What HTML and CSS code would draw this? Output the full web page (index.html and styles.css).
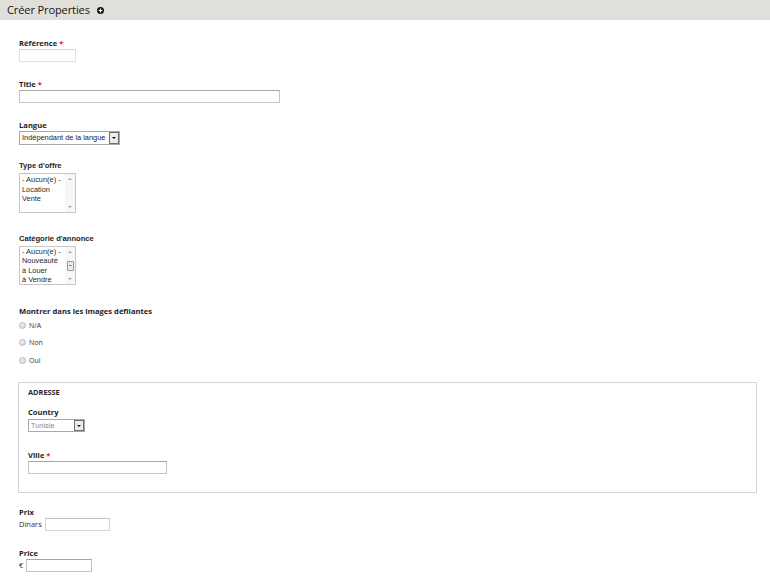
FILE: index.html
```html
<!DOCTYPE html>
<html lang="fr">
<head>
<meta charset="utf-8">
<title>Créer Properties</title>
<link rel="stylesheet" href="styles.css">
</head>
<body>
<div class="header">
  <h1 class="title">Créer Properties</h1>
  <svg class="add-icon" width="7" height="7" viewBox="0 0 7 7"><circle cx="3.5" cy="3.5" r="3.5" fill="#111"/><path d="M3.5 1.6v3.8M1.6 3.5h3.8" stroke="#fff" stroke-width="1.2"/></svg>
</div>
<form class="form">
  <div class="item item-first">
    <div class="label">Référence <span class="req">*</span></div>
    <div class="input input-light w-ref"></div>
  </div>
  <div class="item">
    <div class="label">Title <span class="req">*</span></div>
    <div class="input w-title"></div>
  </div>
  <div class="item">
    <div class="label">Langue</div>
    <div class="select w-lang"><span class="select-text">Indépendant de la langue</span><span class="select-btn"><span class="tri-down"></span></span></div>
  </div>
  <div class="item item-sm">
    <div class="label label-arial">Type d'offre</div>
    <div class="listbox">
      <div class="options">
        <div>- Aucun(e) -</div>
        <div>Location</div>
        <div>Vente</div>
      </div>
      <div class="scroll"><span class="sc-up"></span><span class="sc-down"></span></div>
    </div>
  </div>
  <div class="item item-lg">
    <div class="label label-arial">Catégorie d'annonce</div>
    <div class="listbox listbox-short">
      <div class="options options-tight">
        <div>- Aucun(e) -</div>
        <div>Nouveauté</div>
        <div>à Louer</div>
        <div>à Vendre</div>
      </div>
      <div class="scroll"><span class="sc-up"></span><span class="thumb"></span><span class="sc-down"></span></div>
    </div>
  </div>
  <div class="item item-lg">
    <div class="label">Montrer dans les images défilantes</div>
    <div class="radios">
      <div class="radio"><span class="radio-dot"></span>N/A</div>
      <div class="radio"><span class="radio-dot"></span>Non</div>
      <div class="radio"><span class="radio-dot"></span>Oui</div>
    </div>
  </div>
  <div class="fieldset">
    <div class="legend">ADRESSE</div>
    <div class="item item-country">
      <div class="label">Country</div>
      <div class="select w-country"><span class="select-text muted">Tunisie</span><span class="select-btn"><span class="tri-down"></span></span></div>
    </div>
    <div class="item item-ville">
      <div class="label">Ville <span class="req">*</span></div>
      <div class="input w-ville"></div>
    </div>
  </div>
  <div class="item item-prix">
    <div class="label">Prix</div>
    <div class="row"><span class="prefix">Dinars</span><div class="input input-soft w-prix"></div></div>
  </div>
  <div class="item">
    <div class="label">Price</div>
    <div class="row"><span class="prefix">€</span><div class="input w-price"></div></div>
  </div>
</form>
</body>
</html>
```
FILE: styles.css
```css
* { box-sizing: border-box; }
html, body { margin: 0; padding: 0; background: #fff; }
body { font-family: "Open Sans", "DejaVu Sans", sans-serif; color: #222; width: 770px; height: 578px; overflow: hidden; }

.header {
  height: 20px;
  background: #e0dfd9;
  display: flex;
  align-items: center;
  padding-left: 7px;
}
.title {
  margin: 0;
  font-size: 11px;
  font-weight: 400;
  line-height: 20px;
  color: #151515;
  letter-spacing: -0.1px;
}
.add-icon { margin-left: 7px; margin-top: 1px; }

.form { padding: 0 13px 0 19px; }
.item { margin-top: 17px; }
.item-first { margin-top: 18px; }
.item-sm { margin-top: 16px; }
.item-lg { margin-top: 21px; }

.label {
  font-size: 7.6px;
  font-weight: 700;
  line-height: 10px;
  height: 10px;
  color: #1e1e1e;
  white-space: nowrap;
}
.label-arial { font-family: "Liberation Sans", Arial, sans-serif; font-size: 7.6px; }
.req { color: #e0141e; }

.input {
  margin-top: 1px;
  height: 13px;
  border: 1px solid #c4c4c4;
  border-top-color: #a6a6a6;
  background: #fff;
}
.input-light { border-color: #e2e2e2; border-top-color: #d6d6d6; }
.input-soft { border-color: #d6d6d6; border-top-color: #c2c2c2; }
.w-ref { width: 57px; }
.w-title { width: 261px; }
.w-ville { width: 139px; height: 13px; }
.w-prix { width: 65px; margin-top: 0; }
.w-price { width: 66px; margin-top: 0; }

.select {
  margin-top: 1px;
  height: 14px;
  border: 1px solid #a9a9a9;
  display: flex;
  align-items: stretch;
  background: #fff;
}
.w-lang { width: 101px; }
.w-country { width: 57px; height: 13px; margin-top: 2px; }
.select-text {
  flex: 1;
  font-family: "Liberation Sans", Arial, sans-serif;
  font-size: 7.4px;
  line-height: 12px;
  padding-left: 2px;
  color: #222;
  white-space: nowrap;
  overflow: hidden;
}
.muted { color: #8a8a8a; }
.select-btn {
  width: 10px;
  border: 1px solid #6e6e6e;
  background: #ececec;
  display: flex;
  align-items: center;
  justify-content: center;
}
.tri-down {
  width: 0; height: 0;
  border-left: 2px solid transparent;
  border-right: 2px solid transparent;
  border-top: 2px solid #111;
}

.listbox {
  margin-top: 2px;
  width: 57px;
  height: 40px;
  border: 1px solid #c6c6c6;
  display: flex;
  overflow: hidden;
  background: #fff;
}
.listbox-short { height: 39px; }
.options {
  flex: 1;
  font-family: "Liberation Sans", Arial, sans-serif;
  font-size: 7.4px;
  line-height: 9.7px;
  padding: 1px 0 0 2px;
  color: #2a2a2a;
  white-space: nowrap;
}
.options-tight { padding-top: 0; line-height: 9.4px; }
.scroll {
  width: 10px;
  background: #f6f6f6;
  display: flex;
  flex-direction: column;
  align-items: center;
  justify-content: space-between;
  padding: 4px 0 4px;
}
.sc-up, .sc-down { width: 0; height: 0; border-left: 2px solid transparent; border-right: 2px solid transparent; }
.sc-up { border-bottom: 2px solid #a0a0a0; }
.sc-down { border-top: 2px solid #a0a0a0; }
.thumb {
  width: 7px;
  height: 10px;
  border: 1px solid #9a9a9a;
  border-radius: 1px;
  background: repeating-linear-gradient(#eaeaea 0 3px, #8a8a8a 3px 4px, #eaeaea 4px 5px);
  background-size: 3px 100%;
  background-position: center;
  background-repeat: no-repeat;
  background-color: #eaeaea;
}

.radios { margin-top: 4px; display: flex; flex-direction: column; gap: 7.5px; }
.radio {
  display: flex;
  align-items: center;
  height: 10px;
  font-size: 7px;
  color: #333;
}
.radio-dot {
  width: 7px; height: 7px;
  border-radius: 50%;
  border: 1px solid #b8b8b8;
  background: radial-gradient(circle at 40% 35%, #f2f2f2, #cfcfcf);
  margin-right: 3px;
}

.fieldset {
  margin: 17px 0 0 -1px;
  border: 1px solid #d4d4d4;
  padding: 4px 9px 18px 9px;
  height: 111px;
}
.legend {
  font-size: 7.5px;
  font-weight: 700;
  line-height: 10px;
  height: 10px;
  color: #2a2a2a;
  letter-spacing: -0.1px;
}
.item-country { margin-top: 10px; }
.item-ville { margin-top: 18px; }

.item-prix { margin-top: 14px; }
.row { display: flex; align-items: center; margin-top: 1px; }
.prefix { font-size: 7.5px; color: #333; margin-right: 3px; line-height: 13px; }
```
